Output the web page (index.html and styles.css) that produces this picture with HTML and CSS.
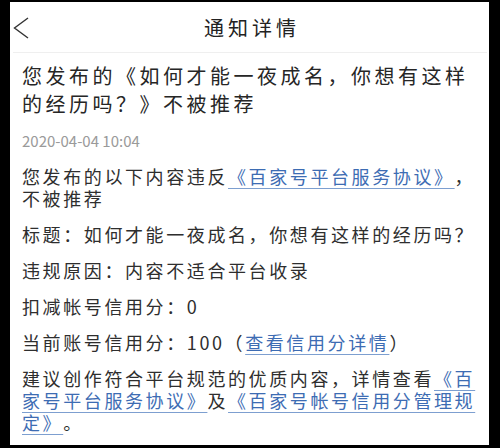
FILE: index.html
```html
<!DOCTYPE html>
<html lang="zh-CN">
<head>
<meta charset="utf-8">
<title>通知详情</title>
<link rel="stylesheet" href="styles.css">
</head>
<body>
<div class="frame">
  <div class="panel">
    <header class="bar">
      <span class="back">
        <svg width="16" height="22" viewBox="0 0 16 22"><path d="M15 1 L1.5 11 L15 21" fill="none" stroke="#333" stroke-width="1.4"/></svg>
      </span>
      <h1 class="bar-title">通知详情</h1>
    </header>
    <main class="content">
      <h2 class="title">您发布的《如何才能一夜成名，你想有这样的经历吗？》不被推荐</h2>
      <div class="date">2020-04-04 10:04</div>
      <p class="para">您发布的以下内容违反<a class="link">《百家号平台服务协议》</a>，不被推荐</p>
      <p class="para">标题：如何才能一夜成名，你想有这样的经历吗？</p>
      <p class="para">违规原因：内容不适合平台收录</p>
      <p class="para">扣减帐号信用分：0</p>
      <p class="para">当前账号信用分：100（<a class="link">查看信用分详情</a>）</p>
      <p class="para">建议创作符合平台规范的优质内容，详情查看<a class="link">《百家号平台服务协议》</a>及<a class="link">《百家号帐号信用分管理规定》</a>。</p>
    </main>
  </div>
</div>
</body>
</html>
```

FILE: styles.css
```css
html, body {
  margin: 0;
  padding: 0;
  background: #000;
}
body {
  width: 500px;
  height: 448px;
  overflow: hidden;
  font-family: "Noto Sans CJK SC", "Noto Sans", sans-serif;
  color: #2e2e2e;
  text-spacing-trim: space-all;
}
.frame {
  padding: 2px 11px 3px 10px;
}
.panel {
  background: #fff;
  height: 443px;
  overflow: hidden;
}
.bar {
  position: relative;
  height: 50px;
  margin: 0 2px 0 3px;
  border-bottom: 1px solid #efefef;
  display: flex;
  align-items: center;
  justify-content: center;
}
.back {
  position: absolute;
  left: 0;
  top: 15px;
  display: block;
  line-height: 0;
}
.bar-title {
  margin: 0;
  padding-left: 4px;
  font-size: 20px;
  font-weight: normal;
  color: #222;
  letter-spacing: 4px;
}
.content {
  padding: 9px 7px 0 12px;
}
.title {
  margin: 0;
  font-size: 20px;
  line-height: 28px;
  font-weight: normal;
  letter-spacing: 3.5px;
  color: #262626;
}
.date {
  margin-top: 13px;
  font-size: 15px;
  line-height: 20px;
  color: #9a9a9a;
}
.para {
  margin: 14px 0 0;
  font-size: 18px;
  line-height: 22px;
  letter-spacing: 2.6px;
  color: #2e2e2e;
}
.link {
  color: #3d6cb3;
  text-decoration: underline;
  text-decoration-color: #7d9fd0;
  text-underline-offset: 4px;
  text-decoration-thickness: 1px;
}
```
